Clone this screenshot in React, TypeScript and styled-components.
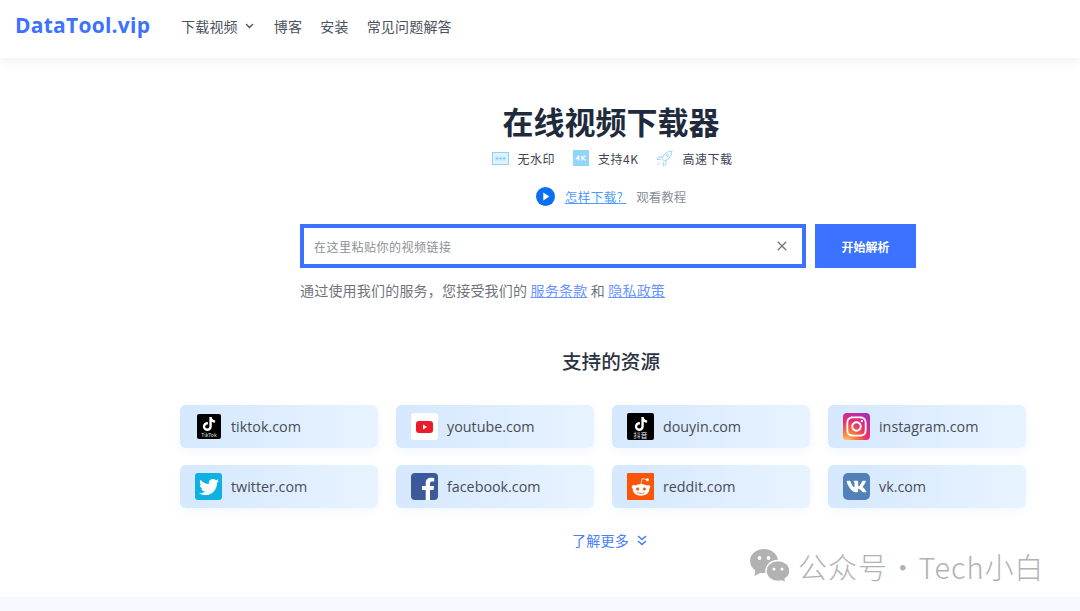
import React from "react";
import styled, { createGlobalStyle } from "styled-components";
import { FaTwitter, FaVk, FaInstagram, FaRedditAlien, FaTiktok } from "react-icons/fa";

const GlobalStyle = createGlobalStyle`
  html, body { margin: 0; padding: 0; background: #fff; }
  body { font-family: "Noto Sans CJK SC", "Noto Sans", sans-serif; }
  #root { overflow: hidden; }
`;

const Page = styled.div`
  position: relative;
  width: 1080px;
  height: 611px;
  display: flex;
  flex-direction: column;
  overflow: hidden;
  background: #fff;
`;

// Header
const Header = styled.header`
  height: 58px;
  flex: none;
  display: flex;
  align-items: center;
  padding-left: 15px;
  background: #fff;
  box-shadow: 0 2px 12px rgba(0, 0, 0, 0.07);
  z-index: 1;
`;

const Logo = styled.div`
  width: 166px;
  margin-top: -8px;
  font-family: "Open Sans", sans-serif;
  font-size: 21px;
  font-weight: 700;
  letter-spacing: 0.25px;
  color: #3b72ff;
`;

const Nav = styled.nav`
  display: flex;
  align-items: center;
  gap: 18px;
  margin-top: -6px;
  font-size: 14px;
  letter-spacing: 0.2px;
  color: #4a5160;
`;

const NavItem = styled.span`
  display: flex;
  align-items: center;
  gap: 7px;
`;

const NavDropdown = styled(NavItem)`
  margin-right: 2px;
`;

// Hero
const Main = styled.main`
  flex: 1;
  padding: 0 0 0 180px;
  display: flex;
  flex-direction: column;
`;

const Centered = styled.div`
  width: 862px;
  display: flex;
  justify-content: center;
  align-items: center;
`;

const Title = styled.h1`
  margin: 41px 0 0;
  font-size: 31px;
  line-height: 44px;
  font-weight: 700;
  color: #1f2a3d;
`;

const Features = styled(Centered)`
  gap: 18px;
  margin-top: 4px;
  padding-left: 2px;
  box-sizing: border-box;
  height: 22px;
`;

const Feature = styled.span`
  display: flex;
  align-items: center;
  gap: 9px;
  font-size: 12px;
  letter-spacing: 0.5px;
  color: #3d4554;
`;

const Tutorial = styled(Centered)`
  gap: 10px;
  margin-top: 17px;
  height: 20px;
  font-size: 12.5px;
`;

const TutorialLink = styled.a`
  color: #4d9bff;
  letter-spacing: 0.5px;
  text-decoration: underline;
  white-space: pre;
`;

const TutorialNote = styled.span`
  color: #8a8f98;
`;

const SearchRow = styled.div`
  display: flex;
  gap: 9px;
  margin: 18px 0 0 120px;
  width: 616px;
  height: 44px;
`;

const InputBox = styled.div`
  flex: 1;
  box-sizing: border-box;
  display: flex;
  align-items: center;
  justify-content: space-between;
  padding: 0 15px 0 10px;
  border: 4px solid #3b72ff;
  font-size: 12px;
  letter-spacing: 0.5px;
  color: #8b8f96;
`;

const StartButton = styled.button`
  width: 101px;
  border: none;
  padding: 0;
  background: #3b72ff;
  color: #fff;
  font-family: inherit;
  font-size: 12px;
  font-weight: 700;
`;

const Terms = styled.p`
  margin: 12px 0 0 120px;
  font-size: 14px;
  line-height: 20px;
  letter-spacing: 0.2px;
  color: #6f747c;
`;

const TermsLink = styled.a`
  color: #6a94ff;
  text-decoration: underline;
`;

const SectionTitle = styled.h2`
  margin: 47px 0 0;
  font-size: 19.6px;
  line-height: 28px;
  font-weight: 500;
  color: #2b3342;
`;

// Sources
const Grid = styled.div`
  display: grid;
  grid-template-columns: repeat(4, 198px);
  grid-auto-rows: 43px;
  gap: 17px 18px;
  margin-top: 30px;
`;

const Card = styled.div`
  display: flex;
  align-items: center;
  gap: 9px;
  padding-left: 15px;
  border-radius: 6px;
  background: linear-gradient(90deg, #d5e8fe, #e8f3ff);
  box-shadow: 0 4px 10px rgba(120, 160, 220, 0.08);
  font-family: "Open Sans", sans-serif;
  font-size: 14.3px;
  color: #474c55;
`;

const Tile = styled.span<{ $bg: string; $size?: number; $radius?: number }>`
  flex: none;
  box-sizing: border-box;
  width: 27px;
  height: 27px;
  display: flex;
  align-items: center;
  justify-content: center;
  overflow: hidden;
  border-radius: ${(p) => p.$radius ?? 3}px;
  background: ${(p) => p.$bg};
  color: #fff;
  font-size: ${(p) => p.$size ?? 20}px;
`;

const BlackTile = styled(Tile)`
  flex-direction: column;
  padding-top: 2px;
  line-height: 1;
`;

const SmallBlackTile = styled(BlackTile)`
  width: 24px;
  height: 25px;
  margin: 0 1px 0 2px;
`;

const TinyLabel = styled.span<{ $size: number }>`
  font-family: "Noto Sans CJK SC", sans-serif;
  font-size: ${(p) => p.$size}px;
  line-height: 8px;
  white-space: nowrap;
  color: #e4e4e4;
`;

const More = styled(Centered)`
  gap: 8px;
  margin-top: 22px;
  padding-right: 3px;
  box-sizing: border-box;
  font-size: 14px;
  line-height: 20px;
  letter-spacing: 0.2px;
  color: #4a7dff;
`;

const Footer = styled.footer`
  height: 14px;
  flex: none;
  background: #f7f9fe;
`;

// wechat official account mark over the corner
const Watermark = styled.div`
  position: absolute;
  left: 750px;
  top: 545px;
  display: flex;
  align-items: center;
  gap: 8px;
  font-family: "Noto Sans CJK SC", sans-serif;
  font-size: 29px;
  line-height: 42px;
  font-weight: 300;
  letter-spacing: 0.95px;
  word-spacing: -7px;
  color: #b2b2b2;
  white-space: nowrap;
`;

const WatermarkIcon = () => (
  <svg width="40" height="34" viewBox="0 0 40 34">
    <path d="M14 0C6.300 0 0 5.300 0 12c0 3.900 2.100 7.200 5.300 9.400L4.500 27l6-3.300c1 .2 2.300.3 3.500.3 7.700 0 14-5.400 14-12S21.700 0 14 0z" fill="#b2b2b2" />
    <circle cx="9.500" cy="9" r="1.900" fill="#fff" />
    <circle cx="18.500" cy="9" r="1.900" fill="#fff" />
    <path d="M28 11.500c-6.700 0-12 4.500-12 10.500s5.300 10.500 12 10.500c1.300 0 2.500-.2 3.700-.5l4.300 2-.8-4.200c2.900-1.900 4.800-4.600 4.800-7.800 0-6-5.300-10.500-12-10.500z" fill="#b2b2b2" stroke="#fff" strokeWidth="1.500" />
    <circle cx="24" cy="20" r="1.500" fill="#fff" />
    <circle cx="32" cy="20" r="1.500" fill="#fff" />
  </svg>
);

const Chevron = () => (
  <svg width="9" height="6" viewBox="0 0 9 6">
    <path d="M1 1l3.500 3.500L8 1" fill="none" stroke="#4a5160" strokeWidth="1.300" />
  </svg>
);

const NoMarkIcon = () => (
  <svg width="17" height="13" viewBox="0 0 17 13">
    <rect x="0.500" y="0.500" width="16" height="12" fill="#dff2fd" stroke="#8fd2f7" />
    <rect x="3" y="4.500" width="11" height="4" fill="#bfe6fb" />
    <path d="M4 6.500h2M7.500 6.500h2M11 6.500h2" stroke="#6cc3f4" strokeWidth="1.200" />
  </svg>
);

const FourKIcon = () => (
  <svg width="16" height="16" viewBox="0 0 16 16">
    <rect width="16" height="16" fill="#8fd6fa" />
    <path d="M5.800 5.500L3.400 8.800h3.200M5.800 5.500v5M9 5.500v5M12.600 5.500L9.500 8l3.100 2.500" fill="none" stroke="#fff" strokeWidth="1.100" />
  </svg>
);

const RocketIcon = () => (
  <svg width="17" height="17" viewBox="0 0 17 17" fill="none" stroke="#8fd2f7" strokeWidth="0.900">
    <path d="M16 1c-4 .3-7 2-9 5l-1 2.600L8.400 11l2.600-1c3-2 4.700-5 5-9z" />
    <path d="M6.200 7H3L1 9.500l4 .2M10 10.800V14l-2.500 2-.3-4" />
    <path d="M4 12.500L1.500 15" />
    <circle cx="11.500" cy="5.500" r="1.200" />
  </svg>
);

const PlayIcon = () => (
  <svg width="19" height="19" viewBox="0 0 19 19">
    <circle cx="9.500" cy="9.500" r="9.500" fill="#0a6ff2" />
    <path d="M7.300 5.500l6 4-6 4z" fill="#fff" />
  </svg>
);

const ClearIcon = () => (
  <svg width="10" height="10" viewBox="0 0 10 10">
    <path d="M.8.800l8.400 8.400M9.200.800L.8 9.200" stroke="#70757d" strokeWidth="1.300" />
  </svg>
);

const YoutubeIcon = () => (
  <svg width="17" height="12" viewBox="0 0 17 12">
    <rect width="17" height="12" rx="3" fill="#ea1c2c" />
    <path d="M7 3.500l4 2.500-4 2.500z" fill="#fff" />
  </svg>
);

const FacebookIcon = () => (
  <svg width="27" height="27" viewBox="0 0 27 27">
    <path d="M19 27V17h3.500l.5-4h-4v-2.500c0-1.200.4-2 2-2h2.200V5c-.4 0-1.700-.2-3.200-.2-3.200 0-5.300 1.900-5.300 5.400V13H11v4h3.700v10z" fill="#fff" />
  </svg>
);

const DoubleChevron = () => (
  <svg width="10" height="11" viewBox="0 0 10 11">
    <path d="M1 1l4 3.500L9 1M1 6l4 3.500L9 6" fill="none" stroke="#4a7dff" strokeWidth="1.600" />
  </svg>
);

const igGradient = "radial-gradient(circle at 15% 105%, #fdc95b 0%, #f9743a 28%, #e8316c 55%, #c32a9f 78%, #8a3ac0 100%)";

const sources = [
  {
    name: "tiktok.com",
    icon: (
      <SmallBlackTile $bg="#000" $size={14} $radius={2}>
        <FaTiktok />
        <TinyLabel $size={5}>TikTok</TinyLabel>
      </SmallBlackTile>
    ),
  },
  { name: "youtube.com", icon: <Tile $bg="#fff"><YoutubeIcon /></Tile> },
  {
    name: "douyin.com",
    icon: (
      <BlackTile $bg="#000" $size={14} $radius={2}>
        <FaTiktok />
        <TinyLabel $size={7}>抖音</TinyLabel>
      </BlackTile>
    ),
  },
  { name: "instagram.com", icon: <Tile $bg={igGradient} $size={23} $radius={4}><FaInstagram /></Tile> },
  { name: "twitter.com", icon: <Tile $bg="#0fb0e4" $size={20}><FaTwitter /></Tile> },
  { name: "facebook.com", icon: <Tile $bg="#3a5a9a" $radius={4}><FacebookIcon /></Tile> },
  { name: "reddit.com", icon: <Tile $bg="#fb5508" $size={20} $radius={1}><FaRedditAlien /></Tile> },
  { name: "vk.com", icon: <Tile $bg="#5280b8" $size={21} $radius={5}><FaVk /></Tile> },
];

const App: React.FC = () => {
  return (
    <Page>
      <GlobalStyle />
      <Header>
        <Logo>DataTool.vip</Logo>
        <Nav>
          <NavDropdown>
            下载视频 <Chevron />
          </NavDropdown>
          <NavItem>博客</NavItem>
          <NavItem>安装</NavItem>
          <NavItem>常见问题解答</NavItem>
        </Nav>
      </Header>
      <Main>
        <Centered>
          <Title>在线视频下载器</Title>
        </Centered>
        <Features>
          <Feature><NoMarkIcon />无水印</Feature>
          <Feature><FourKIcon />支持4K</Feature>
          <Feature><RocketIcon />高速下载</Feature>
        </Features>
        <Tutorial>
          <PlayIcon />
          <TutorialLink>怎样下载? </TutorialLink>
          <TutorialNote>观看教程</TutorialNote>
        </Tutorial>
        <SearchRow>
          <InputBox>
            <span>在这里粘贴你的视频链接</span>
            <ClearIcon />
          </InputBox>
          <StartButton>开始解析</StartButton>
        </SearchRow>
        <Terms>
          通过使用我们的服务，您接受我们的 <TermsLink>服务条款</TermsLink> 和 <TermsLink>隐私政策</TermsLink>
        </Terms>
        <Centered>
          <SectionTitle>支持的资源</SectionTitle>
        </Centered>
        <Grid>
          {sources.map((s) => (
            <Card key={s.name}>
              {s.icon}
              <span>{s.name}</span>
            </Card>
          ))}
        </Grid>
        <More>
          了解更多 <DoubleChevron />
        </More>
      </Main>
      <Footer />
      <Watermark>
        <WatermarkIcon />
        <span>公众号 · Tech小白</span>
      </Watermark>
    </Page>
  );
};

export default App;
